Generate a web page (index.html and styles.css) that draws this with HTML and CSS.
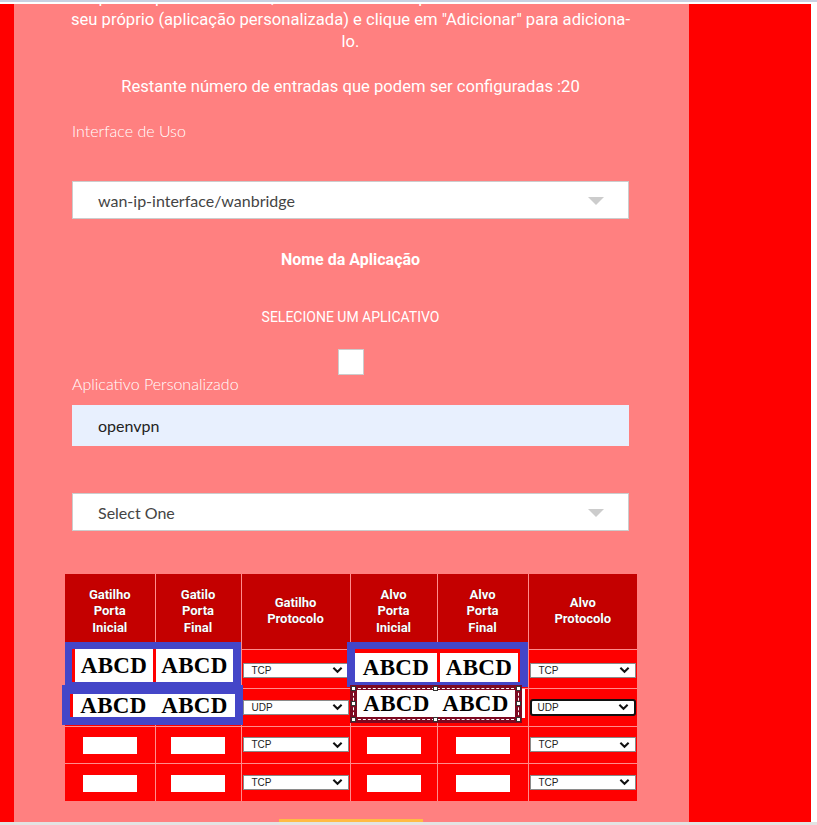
FILE: index.html
```html
<!DOCTYPE html>
<html lang="pt">
<head>
<meta charset="utf-8">
<title>Aplicação</title>
<link rel="stylesheet" href="styles.css">
</head>
<body>
<div class="topbar"></div>
<div class="frame">
  <main class="panel">
    <p class="intro">
      <span>da porta a partir desta tela, selecionando um aplicativo existente ou criar o</span>
      <span>seu próprio (aplicação personalizada) e clique em "Adicionar" para adiciona-</span>
      <span>lo.</span>
    </p>
    <p class="remaining">Restante número de entradas que podem ser configuradas :20</p>
    <div class="field-label">Interface de Uso</div>
    <div class="select-box"><span>wan-ip-interface/wanbridge</span><i class="tri"></i></div>
    <h3 class="app-title">Nome da Aplicação</h3>
    <p class="app-sub">SELECIONE UM APLICATIVO</p>
    <div class="check-row"><span class="checkbox"></span></div>
    <div class="field-label custom">Aplicativo Personalizado</div>
    <div class="text-input">openvpn</div>
    <div class="select-box second"><span>Select One</span><i class="tri"></i></div>

    <div class="table-wrap">
      <table class="rules">
        <colgroup>
          <col class="c1"><col class="c2"><col class="c3"><col class="c4"><col class="c5"><col class="c6">
        </colgroup>
        <thead>
          <tr>
            <th>Gatilho<br>Porta<br>Inicial</th>
            <th>Gatilo<br>Porta<br>Final</th>
            <th>Gatilho<br>Protocolo</th>
            <th>Alvo<br>Porta<br>Inicial</th>
            <th>Alvo<br>Porta<br>Final</th>
            <th>Alvo<br>Protocolo</th>
          </tr>
        </thead>
        <tbody>
          <tr class="r1">
            <td></td><td></td>
            <td><div class="sel"><span>TCP</span><svg viewBox="0 0 12 8"><polyline points="1.5,1.5 6,6 10.5,1.5"/></svg></div></td>
            <td></td><td></td>
            <td><div class="sel"><span>TCP</span><svg viewBox="0 0 12 8"><polyline points="1.5,1.5 6,6 10.5,1.5"/></svg></div></td>
          </tr>
          <tr class="r2">
            <td></td><td></td>
            <td><div class="sel"><span>UDP</span><svg viewBox="0 0 12 8"><polyline points="1.5,1.5 6,6 10.5,1.5"/></svg></div></td>
            <td></td><td></td>
            <td><div class="sel focus"><span>UDP</span><svg viewBox="0 0 12 8"><polyline points="1.5,1.5 6,6 10.5,1.5"/></svg></div></td>
          </tr>
          <tr class="r3">
            <td><span class="port"></span></td>
            <td><span class="port"></span></td>
            <td><div class="sel"><span>TCP</span><svg viewBox="0 0 12 8"><polyline points="1.5,1.5 6,6 10.5,1.5"/></svg></div></td>
            <td><span class="port"></span></td>
            <td><span class="port"></span></td>
            <td><div class="sel"><span>TCP</span><svg viewBox="0 0 12 8"><polyline points="1.5,1.5 6,6 10.5,1.5"/></svg></div></td>
          </tr>
          <tr class="r4">
            <td><span class="port"></span></td>
            <td><span class="port"></span></td>
            <td><div class="sel"><span>TCP</span><svg viewBox="0 0 12 8"><polyline points="1.5,1.5 6,6 10.5,1.5"/></svg></div></td>
            <td><span class="port"></span></td>
            <td><span class="port"></span></td>
            <td><div class="sel"><span>TCP</span><svg viewBox="0 0 12 8"><polyline points="1.5,1.5 6,6 10.5,1.5"/></svg></div></td>
          </tr>
        </tbody>
      </table>

      <div class="mark mark-a"><div class="pair"><span class="abcd w1">ABCD</span><span class="abcd w2">ABCD</span></div></div>
      <div class="mark mark-b"><div class="pair"><span class="abcd">ABCD</span><span class="abcd">ABCD</span></div></div>
      <div class="mark mark-c"><div class="pair"><span class="abcd w1">ABCD</span><span class="abcd w2">ABCD</span></div></div>
      <div class="mark mark-d">
        <div class="pair"><span class="abcd">ABCD</span><span class="abcd">ABCD</span></div>
        <span class="dash"></span>
        <span class="h h-tl"></span><span class="h h-tm"></span><span class="h h-tr"></span>
        <span class="h h-ml"></span><span class="h h-mr"></span>
        <span class="h h-bl"></span><span class="h h-bm"></span><span class="h h-br"></span>
      </div>
      <span class="caret-bar"></span>
    </div>

    <div class="btn-row"><span class="add-btn"></span></div>
  </main>
</div>
<div class="bottombar"></div>
</body>
</html>
```

FILE: styles.css
```css
* { box-sizing: border-box; }
html, body { margin: 0; padding: 0; background: #ffffff; }
body { width: 817px; height: 825px; overflow: hidden; font-family: Roboto, "Liberation Sans", sans-serif; }

.topbar { height: 2px; background: #c9d1e2; margin-bottom: 2px; }

.frame {
  width: 811px;
  height: 818px;
  background: #ff0000;
  padding: 0 122px 0 14px;
  display: flex;
  overflow: hidden;
}

.panel {
  flex: 1;
  background: #ff8080;
  overflow: hidden;
  padding: 0 60px 0 58px;
  color: #ffffff;
}

.intro {
  margin: -17px -50px 0 -50px;
  text-align: center;
  font-size: 16.6px;
  line-height: 22px;
}
.intro span { display: block; white-space: nowrap; }

.remaining {
  margin: 23px -40px 0 -40px;
  text-align: center;
  font-size: 16.6px;
  line-height: 22px;
}

.field-label {
  margin-top: 22px;
  font-family: Lato, "Open Sans", sans-serif;
  font-weight: 300;
  font-size: 16px;
  line-height: 22px;
}

.select-box {
  margin-top: 39px;
  height: 38px;
  background: #ffffff;
  border: 1px solid #cccccc;
  display: flex;
  align-items: center;
  justify-content: space-between;
  padding: 0 24px 0 25px;
  font-family: Lato, "Open Sans", sans-serif;
  font-size: 16px;
  color: #444444;
}
.select-box.second { margin-top: 47px; }
.tri {
  width: 0; height: 0;
  border-left: 8px solid transparent;
  border-right: 8px solid transparent;
  border-top: 8px solid #cccccc;
  margin-top: 2px;
}

.app-title {
  margin: 30px 0 0;
  text-align: center;
  font-size: 16px;
  font-weight: 700;
  line-height: 22px;
}
.app-sub {
  margin: 35px 0 0;
  text-align: center;
  font-size: 14px;
  line-height: 22px;
}

.check-row { margin-top: 21px; display: flex; justify-content: center; height: 26px; }
.checkbox {
  width: 26px; height: 26px;
  background: #ffffff;
  border: 1px solid #cccccc;
}

.field-label.custom { margin-top: 0; line-height: 18px; }

.text-input {
  margin-top: 12px;
  height: 41px;
  background: #e8f0fe;
  display: flex;
  align-items: center;
  padding-left: 26px;
  font-family: Lato, "Open Sans", sans-serif;
  font-size: 16px;
  color: #222222;
}

.table-wrap {
  position: relative;
  margin: 43px -8px 0 -7px;
  width: 572px;
}

.rules {
  width: 572px;
  border-collapse: collapse;
  table-layout: fixed;
}
.c1 { width: 90px; } .c2 { width: 86px; } .c3 { width: 109px; }
.c4 { width: 87px; } .c5 { width: 91px; } .c6 { width: 109px; }

.rules th, .rules td {
  border: 1px solid #ff8c8c;
  padding: 0;
  text-align: center;
  vertical-align: middle;
}
.rules thead tr { height: 75px; }
.rules th {
  background: #c40000;
  color: #ffffff;
  font-family: Roboto, "Liberation Sans", sans-serif;
  font-weight: 700;
  font-size: 13px;
  line-height: 16.5px;
  text-shadow: 0 0 1px #5a0000;
}
.rules tr:first-child th { border-top: none; }
.rules th:first-child, .rules td:first-child { border-left: none; }
.rules th:last-child, .rules td:last-child { border-right: none; }
.rules tbody tr:last-child td { border-bottom: none; }
.rules td { background: #ff0000; }
.r1 { height: 39px; }
.r2 { height: 38px; }
.r3 { height: 37px; }
.r4 { height: 38px; }

.port {
  display: inline-block;
  width: 54px;
  height: 17px;
  background: #ffffff;
  vertical-align: middle;
}

.sel {
  margin: 0 1px;
  height: 15px;
  background: #ffffff;
  border: 1px solid #8a8a8a;
  display: flex;
  align-items: center;
  justify-content: space-between;
  padding: 0 5px 0 8px;
  font-family: "Liberation Sans", Arial, sans-serif;
  font-size: 10px;
  color: #222222;
  text-align: left;
}
.r1 .sel { margin-top: 3px; }
.sel svg { width: 11px; height: 8px; }
.sel polyline { fill: none; stroke: #111111; stroke-width: 2.2; }
.sel.focus {
  border: 2px solid #111111;
  border-radius: 3px;
  height: 17px;
  padding-left: 6px;
}

/* annotation overlays */
.mark { position: absolute; }
.mark .pair {
  display: flex;
  height: 100%;
  background: #ff0000;
}
.abcd {
  background: #ffffff;
  font-family: "Liberation Serif", "Times New Roman", serif;
  font-weight: 700;
  font-size: 23px;
  color: #000000;
  display: flex;
  align-items: center;
  justify-content: center;
  letter-spacing: 0.3px;
}
.mark-a {
  left: 0; top: 68px; width: 176px; height: 45px;
  border: 7px solid #4446c8;
  border-right-width: 8px;
  border-bottom-width: 5px;
}
.mark-a .pair { padding: 0 0 0 3px; gap: 3px; }
.mark-a .abcd { width: 78px; }
.mark-a .abcd.w2 { width: 77px; }

.mark-b {
  left: -3px; top: 111px; width: 181px; height: 40px;
  border: 8px solid #4446c8;
  border-top-width: 9px;
}
.mark-b .pair { padding-left: 3px; }
.mark-b .abcd { flex: 1; }

.mark-c {
  left: 282px; top: 68px; width: 181px; height: 45px;
  border: 8px solid #4446c8;
  border-top-width: 7px;
  border-bottom-width: 5px;
}
.mark-c .pair { padding: 4px 0 0 0; gap: 3px; }
.mark-c .abcd { width: 82px; }
.mark-c .abcd.w2 { width: 78px; }

.mark-d {
  left: 285px; top: 111px; width: 172px; height: 38px;
  background: #7d0a22;
  padding: 5px 7px 6px 7px;
}
.mark-d .pair { background: #ffffff; justify-content: space-around; }
.dash {
  position: absolute;
  left: 3px; top: 3px; right: 3px; bottom: 3px;
  border: 1px dashed #ffffff;
}
.h {
  position: absolute;
  width: 5px; height: 5px;
  background: #ffffff;
  border: 1px solid #333333;
}
.h-tl { left: 1px; top: 1px; }
.h-tm { left: 83px; top: 1px; }
.h-tr { right: 1px; top: 1px; }
.h-ml { left: 1px; top: 16px; }
.h-mr { right: 1px; top: 16px; }
.h-bl { left: 1px; bottom: 1px; }
.h-bm { left: 83px; bottom: 1px; }
.h-br { right: 1px; bottom: 1px; }

.caret-bar {
  position: absolute;
  left: 457px; top: 115px;
  width: 3px; height: 29px;
  background: #ffffff;
}

.btn-row { margin-top: 18px; display: flex; justify-content: center; }
.add-btn {
  display: block;
  width: 144px;
  height: 36px;
  background: #ffbb44;
}

.bottombar { height: 3px; background: #e3e3e3; }
```
